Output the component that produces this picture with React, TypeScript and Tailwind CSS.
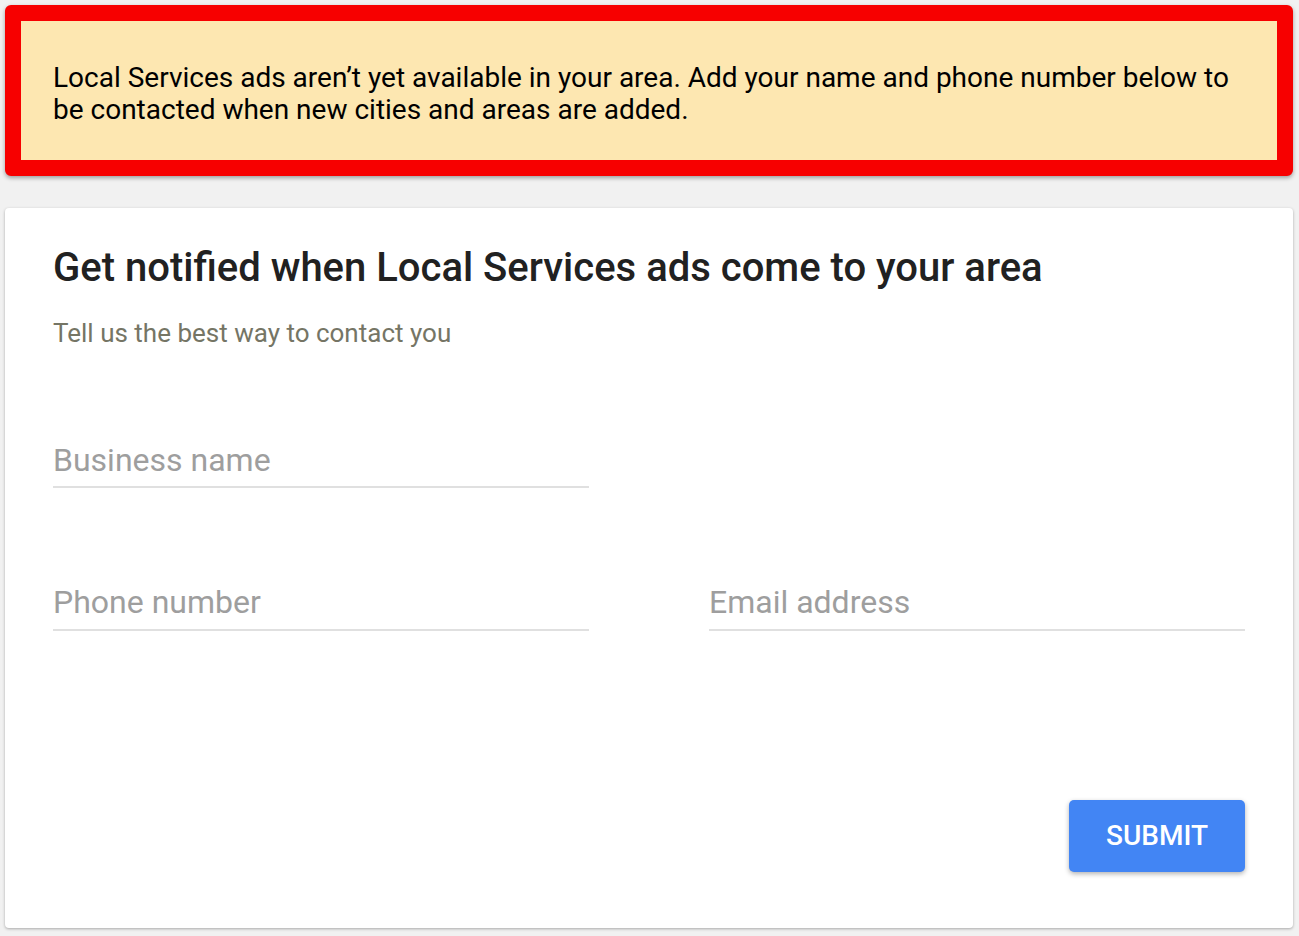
export default function App() {
  return (
    <div
      className="min-h-screen bg-[#f1f1f1] pt-[5px] pl-[5px] pr-[6px] pb-[8px]"
      style={{ fontFamily: 'Roboto, "Liberation Sans", sans-serif' }}
    >
      <div className="rounded-md border-[16px] border-[#f70000] bg-[#fde7b1] pl-[32px] pr-[32px] pt-[41px] pb-[34px] shadow-[0_2px_4px_rgba(0,0,0,0.35)]">
        <p className="text-[28px] leading-[32px] text-black">
          Local Services ads aren’t yet available in your area. Add your name and phone number below to be contacted when new cities and areas are added.
        </p>
      </div>

      <div className="mt-[32px] rounded-sm bg-white px-[48px] pt-[38px] pb-[56px] shadow-[0_1px_3px_rgba(0,0,0,0.3)]">
        <h1 className="text-[40px] leading-[44px] font-medium text-[#212121]">
          Get notified when Local Services ads come to your area
        </h1>
        <p className="mt-[27px] text-[26px] leading-[32px] text-[#757565]">
          Tell us the best way to contact you
        </p>

        <div className="mt-[91px] grid grid-cols-2 gap-x-[120px]">
          <div className="border-b-2 border-[#e0e0e0] pb-[6px]">
            <input
              placeholder="Business name"
              className="w-full bg-transparent text-[32px] leading-[40px] text-[#212121] outline-none placeholder:text-[#9e9e9e]"
            />
          </div>
          <div />
        </div>

        <div className="mt-[94px] grid grid-cols-2 gap-x-[120px]">
          <div className="border-b-2 border-[#e0e0e0] pb-[7px]">
            <input
              placeholder="Phone number"
              className="w-full bg-transparent text-[32px] leading-[40px] text-[#212121] outline-none placeholder:text-[#9e9e9e]"
            />
          </div>
          <div className="border-b-2 border-[#e0e0e0] pb-[7px]">
            <input
              placeholder="Email address"
              className="w-full bg-transparent text-[32px] leading-[40px] text-[#212121] outline-none placeholder:text-[#9e9e9e]"
            />
          </div>
        </div>

        <div className="mt-[169px] flex justify-end">
          <button className="h-[72px] w-[176px] rounded-[5px] bg-[#4285f4] text-[28px] font-medium text-white shadow-[0_2px_5px_rgba(0,0,0,0.3)]">
            SUBMIT
          </button>
        </div>
      </div>
    </div>
  );
}
